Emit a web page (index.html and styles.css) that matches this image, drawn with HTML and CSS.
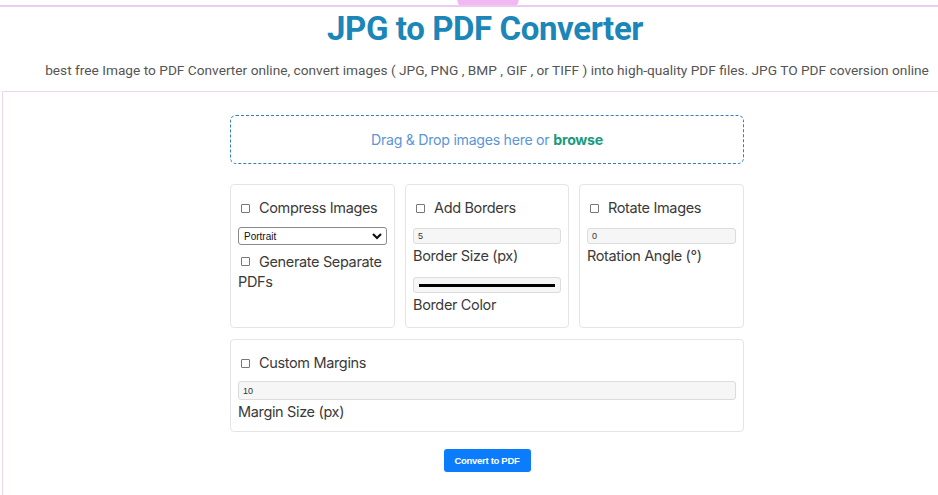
FILE: index.html
```html
<!DOCTYPE html>
<html>
<head>
<meta charset="utf-8">
<link rel="stylesheet" href="styles.css">
</head>
<body>
<div class="page">
  <div class="topbar"><span class="bump"></span></div>
  <header class="header">
    <h1 class="title">JPG to PDF Converter</h1>
    <p class="subtitle">best free Image to PDF Converter online, convert images ( JPG, PNG , BMP , GIF , or TIFF ) into high-quality PDF files. JPG TO PDF coversion online</p>
  </header>
  <main class="panel">
    <div class="inner">
      <div class="dropzone">Drag &amp; Drop images here or <b class="browse">browse</b></div>
      <div class="cards">
        <div class="card">
          <label class="check"><span class="box"></span>Compress Images</label>
          <div class="select"><span>Portrait</span><svg width="10" height="8" viewBox="0 0 10 8"><path d="M1 2 L5 6 L9 2" fill="none" stroke="#111" stroke-width="2.2"/></svg></div>
          <label class="check wrap"><span class="box"></span>Generate Separate PDFs</label>
        </div>
        <div class="card">
          <label class="check"><span class="box"></span>Add Borders</label>
          <div class="field">5</div>
          <div class="caption">Border Size (px)</div>
          <div class="field color"><span class="swatch"></span></div>
          <div class="caption">Border Color</div>
        </div>
        <div class="card">
          <label class="check"><span class="box"></span>Rotate Images</label>
          <div class="field">0</div>
          <div class="caption">Rotation Angle (°)</div>
        </div>
      </div>
      <div class="card wide">
        <label class="check"><span class="box"></span>Custom Margins</label>
        <div class="field tall">10</div>
        <div class="caption">Margin Size (px)</div>
      </div>
      <div class="actions"><button class="btn">Convert to PDF</button></div>
    </div>
  </main>
</div>
</body>
</html>
```
FILE: styles.css
```css
html, body { margin: 0; padding: 0; overflow: hidden; background: #fff; }
body { font-family: Inter, "Noto Sans", sans-serif; color: #3a3a3a; }
.page { width: 970px; height: 495px; position: relative; }
.topbar { height: 5px; border-bottom: 2px solid #ecccef; position: relative; }
.bump { position: absolute; left: 456px; top: -4px; width: 64px; height: 9px; background: #f2b8f3; border-radius: 0 0 6px 6px / 0 0 2px 2px; clip-path: polygon(0 0, 100% 0, 96% 100%, 4% 100%); }
.header { text-align: center; }
.title { margin: 2px 0 0; font-family: Roboto, sans-serif; font-weight: 700; font-size: 33px; line-height: 40px; color: #1b86b8; letter-spacing: -0.4px; }
.subtitle { margin: 11px 0 0; font-family: Roboto, sans-serif; font-size: 13.7px; line-height: 20px; color: #555; padding-left: 4px; }
.panel { margin: 11px 0 0 2px; border-top: 1px solid #ead8ee; border-left: 1px solid #ead8ee; height: 420px; }
.inner { width: 514px; margin-left: 227px; padding-top: 23px; }
.dropzone { height: 47px; border: 1px dashed #2f7fc0; border-radius: 6px; display: flex; align-items: center; justify-content: center; font-size: 14.2px; color: #5b96d8; letter-spacing: -0.3px; }
.browse { color: #1a9a80; font-weight: 700; margin-left: 4px; }
.cards { display: grid; grid-template-columns: 165px 164px 165px; column-gap: 10px; margin-top: 20px; height: 144px; }
.card { border: 1px solid #e5e5e5; border-radius: 4px; padding: 13px 7px 0; box-sizing: border-box; }
.card.wide { margin-top: 11px; height: 93px; }
.check { display: flex; align-items: center; font-size: 14.5px; line-height: 20px; color: #3a3a3a; letter-spacing: -0.35px; }
.check.wrap { display: block; margin-top: 7px; }
.box { display: inline-block; width: 7px; height: 7px; border: 1px solid #777; border-radius: 1px; margin: 0 9px 0 3px; vertical-align: 1px; }
.select { margin-top: 9px; height: 16px; border: 1px solid #8a8a8a; border-radius: 3px; display: flex; align-items: center; justify-content: space-between; padding: 0 4px 0 5px; font-family: "Liberation Sans", Arial, sans-serif; font-size: 10px; color: #111; }
.field { margin-top: 10px; height: 16px; box-sizing: border-box; border: 1px solid #dcdcdc; border-radius: 3px; background: #f6f6f6; font-family: "Liberation Sans", Arial, sans-serif; font-size: 9px; color: #333; padding-left: 4px; display: flex; align-items: center; }
.field.tall { height: 19px; margin-top: 8px; }
.field.color { margin-top: 11px; padding: 0 5px; }
.swatch { flex: 1; height: 3px; background: #000; }
.caption { font-size: 14.5px; line-height: 20px; color: #3a3a3a; margin-top: 2px; letter-spacing: -0.35px; }
.actions { display: flex; justify-content: center; margin-top: 17px; padding-left: 0; }
.btn { width: 87px; height: 23px; border: 0; border-radius: 3px; background: #0a7cfc; color: #fff; font-family: "Liberation Sans", Arial, sans-serif; font-size: 9.5px; font-weight: 700; letter-spacing: -0.3px; }
```
